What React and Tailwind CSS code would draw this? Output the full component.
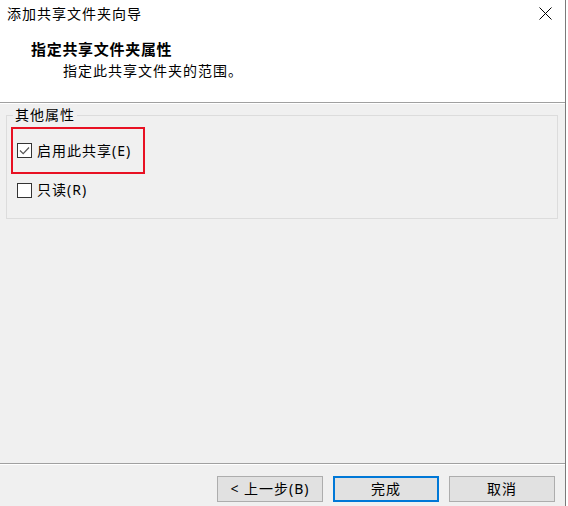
import React from "react";

function Check({ checked }) {
  return (
    <div className="w-[15px] h-[15px] border border-[#333333] bg-white flex items-center justify-center shrink-0">
      {checked && (
        <svg width="13" height="13" viewBox="0 0 13 13">
          <path d="M2 6.5 L5.2 9.7 L11 3.5" fill="none" stroke="#555555" strokeWidth="1.2" />
        </svg>
      )}
    </div>
  );
}

export default function App() {
  const font = "font-['Noto_Sans','Noto_Sans_CJK_SC',sans-serif]";
  return (
    <div className={`w-[568px] h-[506px] bg-white flex ${font} text-[14px] tracking-[1px] text-black overflow-hidden`}>
      <div className="w-[566px] h-full flex flex-col border-r border-[#7a7a7a]">
        {/* title bar */}
        <div className="h-[27px] flex items-center justify-between pl-[7px] pr-[13px] bg-white">
          <span className="leading-[20px]">添加共享文件夹向导</span>
          <svg width="13" height="13" viewBox="0 0 13 13">
            <path d="M0.5 0.5 L12.5 12.5 M12.5 0.5 L0.5 12.5" stroke="#000" strokeWidth="1" />
          </svg>
        </div>
        {/* header */}
        <div className="h-[76px] bg-white border-b border-[#a0a0a0] pt-[12px]">
          <div className="pl-[31px] font-bold text-[15px] tracking-[0.7px] leading-[20px]">指定共享文件夹属性</div>
          <div className="pl-[63px] mt-[2px] leading-[20px]">指定此共享文件夹的范围。</div>
        </div>
        {/* body */}
        <div className="flex-1 bg-[#f0f0f0] border-t border-white flex flex-col">
          <fieldset className="ml-[6px] mt-[2px] w-[552px] h-[113px] border border-[#dcdcdc]">
            <legend className="ml-[6px] px-[2px] leading-[18px]">其他属性</legend>
            <div className="ml-[4px] mt-[3px] w-[134px] h-[47px] border-2 border-[#e81123] flex items-center pl-[4px] gap-[5px]">
              <Check checked />
              <span className="leading-[20px]">启用此共享(E)</span>
            </div>
            <div className="mt-[6px] h-[20px] pl-[10px] flex items-center gap-[5px]">
              <Check />
              <span className="leading-[20px]">只读(R)</span>
            </div>
          </fieldset>
        </div>
        {/* footer */}
        <div className="h-[43px] bg-[#f0f0f0] border-t border-[#a0a0a0] flex flex-col">
          <div className="border-t border-white flex justify-end gap-[10px] pr-[10px] pt-[11px]">
            <button className="w-[106px] h-[26px] bg-[#e1e1e1] border border-[#adadad] flex items-center justify-center leading-[20px]">
              &lt; 上一步(B)
            </button>
            <button className="w-[106px] h-[26px] bg-[#e1e1e1] border-2 border-[#0078d7] flex items-center justify-center leading-[20px]">
              完成
            </button>
            <button className="w-[106px] h-[26px] bg-[#e1e1e1] border border-[#adadad] flex items-center justify-center leading-[20px]">
              取消
            </button>
          </div>
        </div>
      </div>
      <div className="flex-1 bg-white" />
    </div>
  );
}
